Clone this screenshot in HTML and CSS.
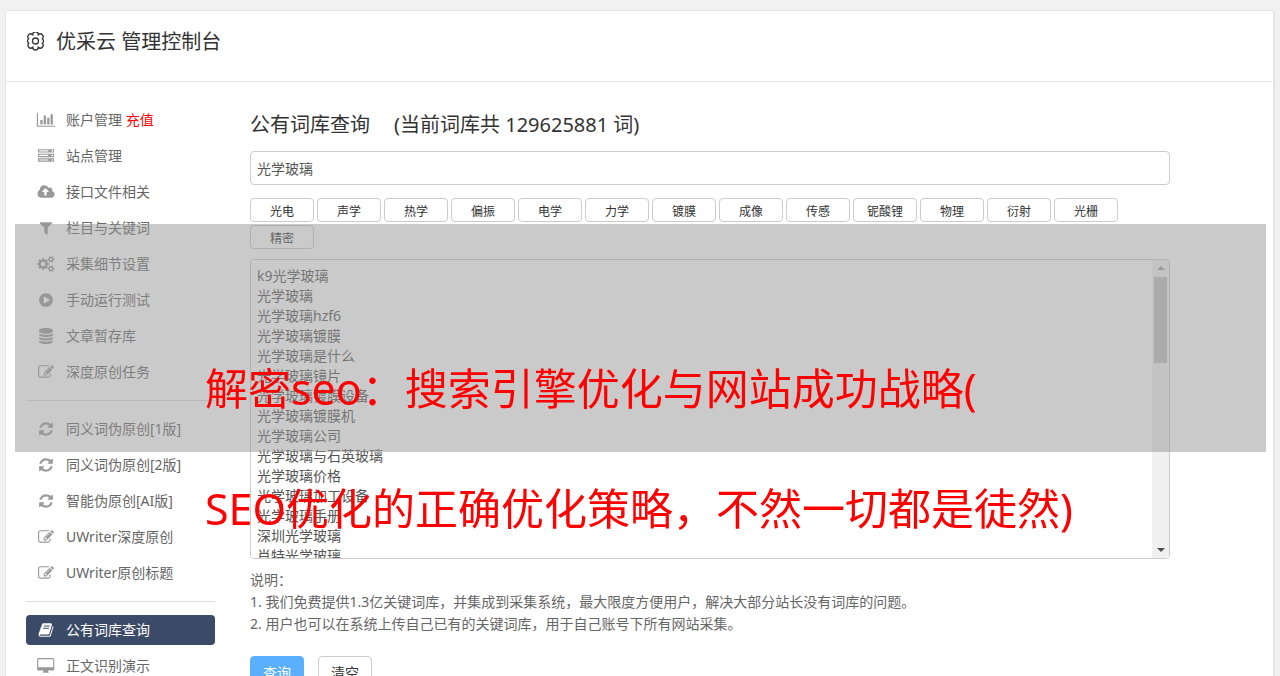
FILE: index.html
```html
<!DOCTYPE html>
<html lang="zh-CN">
<head>
    <meta charset="UTF-8">
    <meta name="viewport" content="width=device-width, initial-scale=1.0">
    <title>优采云 管理控制台</title>
    <link rel="stylesheet" href="styles.css">
</head>
<body>
    <!-- icon set -->
    <svg class="sprite" width="0" height="0" aria-hidden="true">
        <symbol id="i-chart" viewBox="0 0 2048 1792"><path d="M640 896v512h-256v-512h256zm384-512v1024h-256v-1024h256zm1024 1152v128h-2048v-1536h128v1408h1920zm-640-896v768h-256v-768h256zm384-384v1152h-256v-1152h256z"/></symbol>
        <symbol id="i-server" viewBox="0 0 1792 1792"><path d="M128 1408h1024v-128h-1024v128zm0-512h1024v-128h-1024v128zm1568 448q0-40-28-68t-68-28-68 28-28 68 28 68 68 28 68-28 28-68zm-1568-960h1024v-128h-1024v128zm1568 448q0-40-28-68t-68-28-68 28-28 68 28 68 68 28 68-28 28-68zm0-512q0-40-28-68t-68-28-68 28-28 68 28 68 68 28 68-28 28-68zm96 832v384h-1792v-384h1792zm0-512v384h-1792v-384h1792zm0-512v384h-1792v-384h1792z"/></symbol>
        <symbol id="i-upload" viewBox="0 0 1920 1792"><path d="M1280 864q0-14-9-23l-352-352q-9-9-23-9t-23 9l-351 351q-10 12-10 24 0 14 9 23t23 9h224v352q0 13 9.5 22.5t22.5 9.5h192q13 0 22.5-9.5t9.5-22.5v-352h224q13 0 22.5-9.5t9.5-22.5zm640 288q0 159-112.5 271.5t-271.5 112.5h-1088q-185 0-316.5-131.5t-131.5-316.5q0-130 70-240t188-165q-2-30-2-43 0-212 150-362t362-150q156 0 285.5 87t188.5 231q71-62 166-62 106 0 181 75t75 181q0 76-41 138 130 31 213.5 135.5t83.5 238.5z"/></symbol>
        <symbol id="i-filter" viewBox="0 0 1792 1792"><path d="M1595 295q17 41-14 70l-493 493v742q0 42-39 59-13 5-25 5-27 0-45-19l-256-256q-19-19-19-45v-486l-493-493q-31-29-14-70 17-39 59-39h1280q42 0 59 39z"/></symbol>
        <symbol id="i-cogs" viewBox="0 0 1920 1792"><path d="M896 896q0-106-75-181t-181-75-181 75-75 181 75 181 181 75 181-75 75-181zm768 512q0-52-38-90t-90-38-90 38-38 90q0 53 37.5 90.5t90.5 37.5 90.5-37.5 37.5-90.5zm0-1024q0-52-38-90t-90-38-90 38-38 90q0 53 37.5 90.5t90.5 37.5 90.5-37.5 37.5-90.5zm-384 421v185q0 10-7 19.5t-16 10.5l-155 24q-11 35-32 76 34 48 90 115 7 11 7 20 0 12-7 19-23 30-82.5 89.5t-78.5 59.5q-11 0-21-7l-115-90q-37 19-77 31-11 108-23 155-7 24-30 24h-186q-11 0-20-7.5t-10-17.5l-23-153q-34-10-75-31l-118 89q-7 7-20 7-11 0-21-8-144-133-144-160 0-9 7-19 10-14 41-53t47-61q-23-44-35-82l-152-24q-10-1-17-9.5t-7-19.5v-185q0-10 7-19.5t16-10.5l155-24q11-35 32-76-34-48-90-115-7-11-7-20 0-12 7-20 22-30 82-89t79-59q11 0 21 7l115 90q34-18 77-32 11-108 23-154 7-24 30-24h186q11 0 20 7.5t10 17.5l23 153q34 10 75 31l118-89q8-7 20-7 11 0 21 8 144 133 144 160 0 8-7 19-12 16-42 54t-45 60q23 48 34 82l152 23q10 2 17 10.5t7 19.5zm640 533v140q0 16-149 31-12 27-30 52 51 113 51 138 0 4-4 7-122 71-124 71-8 0-46-47t-52-68q-20 2-30 2t-30-2q-14 21-52 68t-46 47q-2 0-124-71-4-3-4-7 0-25 51-138-18-25-30-52-149-15-149-31v-140q0-16 149-31 13-29 30-52-51-113-51-138 0-4 4-7 4-2 35-20t59-34 30-16q8 0 46 46.5t52 67.5q20-2 30-2t30 2q51-71 92-112l6-2q4 0 124 70 4 3 4 7 0 25-51 138 17 23 30 52 149 15 149 31zm0-1024v140q0 16-149 31-12 27-30 52 51 113 51 138 0 4-4 7-122 71-124 71-8 0-46-47t-52-68q-20 2-30 2t-30-2q-14 21-52 68t-46 47q-2 0-124-71-4-3-4-7 0-25 51-138-18-25-30-52-149-15-149-31v-140q0-16 149-31 13-29 30-52-51-113-51-138 0-4 4-7 4-2 35-20t59-34 30-16q8 0 46 46.5t52 67.5q20-2 30-2t30 2q51-71 92-112l6-2q4 0 124 70 4 3 4 7 0 25-51 138 17 23 30 52 149 15 149 31z"/></symbol>
        <symbol id="i-play" viewBox="0 0 1792 1792"><path d="M896 128q209 0 385.5 103t279.5 279.5 103 385.5-103 385.5-279.5 279.5-385.5 103-385.5-103-279.5-279.5-103-385.5 103-385.5 279.5-279.5 385.5-103zm384 823q32-18 32-55t-32-55l-544-320q-31-19-64-1-32 19-32 56v640q0 37 32 56 16 8 32 8 17 0 32-9z"/></symbol>
        <symbol id="i-database" viewBox="0 0 1792 1792"><path d="M896 768q237 0 443-43t325-127v170q0 69-103 128t-280 93.5-385 34.5-385-34.5-280-93.5-103-128v-170q119 84 325 127t443 43zm0 768q237 0 443-43t325-127v170q0 69-103 128t-280 93.5-385 34.5-385-34.5-280-93.5-103-128v-170q119 84 325 127t443 43zm0-384q237 0 443-43t325-127v170q0 69-103 128t-280 93.5-385 34.5-385-34.5-280-93.5-103-128v-170q119 84 325 127t443 43zm0-1152q208 0 385 34.5t280 93.5 103 128v128q0 69-103 128t-280 93.5-385 34.5-385-34.5-280-93.5-103-128v-128q0-69 103-128t280-93.5 385-34.5z"/></symbol>
        <symbol id="i-edit" viewBox="0 0 1792 1792"><path d="M888 1184l116-116-152-152-116 116v56h96v96h56zm440-720q-16-16-33 1l-350 350q-17 17-1 33t33-1l350-350q17-17 1-33zm80 594v190q0 119-84.5 203.5t-203.5 84.5h-832q-119 0-203.5-84.5t-84.5-203.5v-832q0-119 84.5-203.5t203.5-84.5h832q63 0 117 25 15 7 18 23 3 17-9 29l-49 49q-14 14-32 8-23-6-45-6h-832q-66 0-113 47t-47 113v832q0 66 47 113t113 47h832q66 0 113-47t47-113v-126q0-13 9-22l64-64q15-15 35-7t20 29zm-96-738l288 288-672 672h-288v-288zm444 132l-92 92-288-288 92-92q28-28 68-28t68 28l152 152q28 28 28 68t-28 68z"/></symbol>
        <symbol id="i-refresh" viewBox="0 0 1792 1792"><path d="M1639 1056q0 5-1 7-64 268-268 434.5t-478 166.5q-146 0-282.5-55t-243.5-157l-129 129q-19 19-45 19t-45-19-19-45v-448q0-26 19-45t45-19h448q26 0 45 19t19 45-19 45l-137 137q71 66 161 102t187 36q134 0 250-65t186-179q11-17 53-117 8-23 30-23h192q13 0 22.5 9.5t9.5 22.5zm25-800v448q0 26-19 45t-45 19h-448q-26 0-45-19t-19-45 19-45l138-138q-148-137-349-137-134 0-250 65t-186 179q-11 17-53 117-8 23-30 23h-199q-13 0-22.5-9.5t-9.5-22.5v-7q65-268 270-434.5t480-166.5q146 0 284 55.5t245 156.5l130-129q19-19 45-19t45 19 19 45z"/></symbol>
        <symbol id="i-book" viewBox="0 0 1792 1792"><path d="M1703 478q40 57 18 129l-275 906q-19 64-76.5 107.5t-122.5 43.5h-923q-77 0-148.5-53.5t-99.5-131.5q-24-67-2-127 0-4 3-27t4-37q1-8-3-21.5t-3-19.5q2-11 8-21t16.5-23.5 16.5-23.5q23-38 45-91.5t30-91.5q3-10 .5-30t-.5-28q3-11 17-28t17-23q21-36 42-92t25-90q1-9-2.5-32t.5-28q4-13 22-30.5t22-22.5q19-26 42.5-84.5t27.5-96.5q1-8-3-25.5t-2-26.5q2-8 9-18t18-23 17-21q8-12 16.5-30.5t15-35 16-36 19.5-32 26.5-23.5 36-11.5 47.5 5.5l-1 3q38-9 51-9h761q74 0 114 56t18 130l-274 906q-36 119-71.5 153.5t-128.5 34.5h-869q-27 0-38 15-11 16-1 43 24 70 144 70h923q29 0 56-15.5t35-41.5l300-987q7-22 5-57 38 15 59 43zm-1064 2q-4 13 2 22.5t20 9.5h608q13 0 25.5-9.5t16.5-22.5l21-64q4-13-2-22.5t-20-9.5h-608q-13 0-25.5 9.5t-16.5 22.5zm-83 256q-4 13 2 22.5t20 9.5h608q13 0 25.5-9.5t16.5-22.5l21-64q4-13-2-22.5t-20-9.5h-608q-13 0-25.5 9.5t-16.5 22.5z"/></symbol>
        <symbol id="i-desktop" viewBox="0 0 1856 1792"><path d="M1728 992v-832q0-13-9.5-22.5t-22.5-9.5h-1600q-13 0-22.5 9.5t-9.5 22.5v832q0 13 9.5 22.5t22.5 9.5h1600q13 0 22.5-9.5t9.5-22.5zm128-832v1088q0 66-47 113t-113 47h-544q0 37 16 77.5t32 71 16 43.5q0 26-19 45t-45 19h-512q-26 0-45-19t-19-45q0-14 16-44t32-70 16-78h-544q-66 0-113-47t-47-113v-1088q0-66 47-113t113-47h1600q66 0 113 47t47 113z"/></symbol>
    </svg>

    <div class="panel">
        <header class="panel-head">
            <svg class="gear" viewBox="0 0 20 20" aria-hidden="true">
                <path d="M16.3 6.7A2.8 2.8 0 0 1 16.3 11.3A2.8 2.8 0 0 1 12.3 15.3A2.8 2.8 0 0 1 6.7 15.3A2.8 2.8 0 0 1 2.7 11.3A2.8 2.8 0 0 1 2.7 6.7A2.8 2.8 0 0 1 6.7 2.7A2.8 2.8 0 0 1 12.3 2.7A2.8 2.8 0 0 1 16.3 6.7z"/>
                <circle cx="9.5" cy="9" r="3"/>
            </svg>
            <h1 class="panel-title">优采云 管理控制台</h1>
        </header>

        <div class="panel-body">
            <nav class="menu">
                <a class="menu-item" href="#"><svg class="icon"><use href="#i-chart"/></svg><span>账户管理 <span class="red">充值</span></span></a>
                <a class="menu-item" href="#"><svg class="icon"><use href="#i-server"/></svg>站点管理</a>
                <a class="menu-item" href="#"><svg class="icon"><use href="#i-upload"/></svg>接口文件相关</a>
                <a class="menu-item" href="#"><svg class="icon"><use href="#i-filter"/></svg>栏目与关键词</a>
                <a class="menu-item" href="#"><svg class="icon"><use href="#i-cogs"/></svg>采集细节设置</a>
                <a class="menu-item" href="#"><svg class="icon"><use href="#i-play"/></svg>手动运行测试</a>
                <a class="menu-item" href="#"><svg class="icon"><use href="#i-database"/></svg>文章暂存库</a>
                <a class="menu-item" href="#"><svg class="icon"><use href="#i-edit"/></svg>深度原创任务</a>
                <hr class="menu-line">
                <a class="menu-item" href="#"><svg class="icon"><use href="#i-refresh"/></svg>同义词伪原创[1版]</a>
                <a class="menu-item" href="#"><svg class="icon"><use href="#i-refresh"/></svg>同义词伪原创[2版]</a>
                <a class="menu-item" href="#"><svg class="icon"><use href="#i-refresh"/></svg>智能伪原创[AI版]</a>
                <a class="menu-item" href="#"><svg class="icon"><use href="#i-edit"/></svg>UWriter深度原创</a>
                <a class="menu-item" href="#"><svg class="icon"><use href="#i-edit"/></svg>UWriter原创标题</a>
                <hr class="menu-line">
                <a class="menu-item active" href="#"><svg class="icon"><use href="#i-book"/></svg>公有词库查询</a>
                <a class="menu-item" href="#"><svg class="icon"><use href="#i-desktop"/></svg>正文识别演示</a>
            </nav>

            <main class="content">
                <h2 class="content-title"><label for="keyword">公有词库查询</label><span>(当前词库共 129625881 词)</span></h2>
                <input type="text" class="field" id="keyword" value="光学玻璃">

                <div class="tags">
                    <button type="button" class="tag">光电</button>
                    <button type="button" class="tag">声学</button>
                    <button type="button" class="tag">热学</button>
                    <button type="button" class="tag">偏振</button>
                    <button type="button" class="tag">电学</button>
                    <button type="button" class="tag">力学</button>
                    <button type="button" class="tag">镀膜</button>
                    <button type="button" class="tag">成像</button>
                    <button type="button" class="tag">传感</button>
                    <button type="button" class="tag">铌酸锂</button>
                    <button type="button" class="tag">物理</button>
                    <button type="button" class="tag">衍射</button>
                    <button type="button" class="tag">光栅</button>
                    <button type="button" class="tag">精密</button>
                </div>

                <div class="result-box">
                    <textarea class="field result" aria-label="查询结果">k9光学玻璃
光学玻璃
光学玻璃hzf6
光学玻璃镀膜
光学玻璃是什么
光学玻璃镜片
光学玻璃镀膜设备
光学玻璃镀膜机
光学玻璃公司
光学玻璃与石英玻璃
光学玻璃价格
光学玻璃加工设备
光学玻璃手册
深圳光学玻璃
肖特光学玻璃</textarea>
                    <div class="scrollbar" aria-hidden="true">
                        <svg class="arrow up" viewBox="0 0 8 4"><path d="M0 4L4 0L8 4z"/></svg>
                        <div class="thumb"></div>
                        <svg class="arrow down" viewBox="0 0 8 4"><path d="M0 0L4 4L8 0z"/></svg>
                    </div>
                </div>

                <div class="notes">
                    <p>说明&#xFF1A;</p>
                    <p>1. 我们免费提供1.3亿关键词库&#xFF0C;并集成到采集系统&#xFF0C;最大限度方便用户&#xFF0C;解决大部分站长没有词库的问题。</p>
                    <p>2. 用户也可以在系统上传自己已有的关键词库&#xFF0C;用于自己账号下所有网站采集。</p>
                </div>

                <div class="actions">
                    <button type="button" class="btn btn-primary">查询</button>
                    <button type="button" class="btn">清空</button>
                </div>
            </main>
        </div>
    </div>

    <div class="banner">
        <p>解密seo&#xFF1A;搜索引擎优化与网站成功战略(</p>
        <p>SEO优化的正确优化策略&#xFF0C;不然一切都是徒然)</p>
    </div>
</body>
</html>
```
FILE: styles.css
```css
* {
    box-sizing: border-box;
}
html {
    overflow: hidden;
}
body {
    position: relative;
    margin: 0;
    padding: 10px 5px 0;
    background: #f1f1f1;
    color: #666;
    font: 14px/20px "Noto Sans", "Noto Sans CJK SC", sans-serif;
}
h1, h2, p {
    margin: 0;
    font-weight: 400;
}
.sprite {
    position: absolute;
}

/* panel */
.panel {
    border: 1px solid #e5e5e5;
    border-right-width: 2px;
    border-radius: 4px;
    background: #fff;
}
.panel-head {
    display: flex;
    align-items: center;
    gap: 10px;
    height: 71px;
    padding: 0 20px 8px;
    border-bottom: 1px solid #e5e5e5;
    color: #333;
}
.gear {
    width: 20px;
    height: 20px;
    fill: none;
    stroke: #333;
    stroke-width: 1.3;
}
.panel-title {
    font-size: 20px;
    line-height: 28px;
}
.panel-body {
    display: flex;
    gap: 35px;
    padding: 23px 103px 30px 20px;
}

/* left menu */
.menu {
    display: flex;
    flex: 0 0 189px;
    flex-direction: column;
    gap: 6px;
}
.menu-item {
    display: flex;
    align-items: center;
    height: 30px;
    border-radius: 4px;
    color: #666;
    text-decoration: none;
}
.icon {
    flex: 0 0 40px;
    height: 16px;
    fill: #999;
}
.menu-item.active {
    background: #3b4a66;
    color: #fff;
}
.active .icon {
    fill: #fff;
}
.menu-line {
    width: 100%;
    margin: 7px 0;
    border: 0;
    border-top: 1px solid #ddd;
}
.red {
    color: #f00;
}

/* content */
.content {
    flex: 1;
    min-width: 0;
}
.content-title {
    display: flex;
    gap: 24px;
    padding: 6px 0 12px;
    color: #333;
    font-size: 20px;
    line-height: 28px;
}
.field {
    display: block;
    width: 100%;
    height: 34px;
    padding: 0 6px;
    border: 1px solid #ccc;
    border-radius: 4px;
    background: #fff;
    color: #555;
    font: inherit;
}
.tags {
    display: flex;
    flex-wrap: wrap;
    gap: 3px;
    margin: 13px 0 10px;
}
.tag {
    width: 64px;
    height: 24px;
    padding: 4px 0 0;
    border: 1px solid #ccc;
    border-radius: 4px;
    background: #fff;
    color: #333;
    font: 12px/18px "Noto Sans", "Noto Sans CJK SC", sans-serif;
}
.result-box {
    position: relative;
}
.result {
    height: 300px;
    padding: 6px 24px 6px 6px;
    resize: none;
    scrollbar-width: none;
}
.scrollbar {
    position: absolute;
    top: 1px;
    right: 1px;
    bottom: 1px;
    display: flex;
    flex-direction: column;
    align-items: center;
    width: 17px;
    padding: 6px 0;
    border-radius: 0 3px 3px 0;
    background: #f0f0f0;
}
.arrow {
    width: 8px;
    height: 4px;
}
.up {
    fill: #a3a3a3;
}
.down {
    margin-top: auto;
    fill: #505050;
}
.thumb {
    width: 13px;
    height: 86px;
    margin-top: 7px;
    background: #c1c1c1;
}
.notes {
    margin: 10px 0 21px;
    line-height: 22px;
}
.actions {
    display: flex;
    gap: 14px;
}
.btn {
    width: 54px;
    height: 34px;
    padding: 0;
    border: 1px solid #ccc;
    border-radius: 4px;
    background: #fff;
    color: #333;
    font: inherit;
}
.btn-primary {
    border-color: #5aafff;
    background: #5aafff;
    color: #fff;
}

/* banner over the page */
.banner {
    position: absolute;
    top: 224px;
    left: 15px;
    right: 14px;
    height: 228px;
    padding: 105px 0 0 190px;
    background: rgba(150, 150, 150, .5);
    color: #f00;
    font-size: 43px;
    line-height: 120px;
    white-space: nowrap;
}
```
